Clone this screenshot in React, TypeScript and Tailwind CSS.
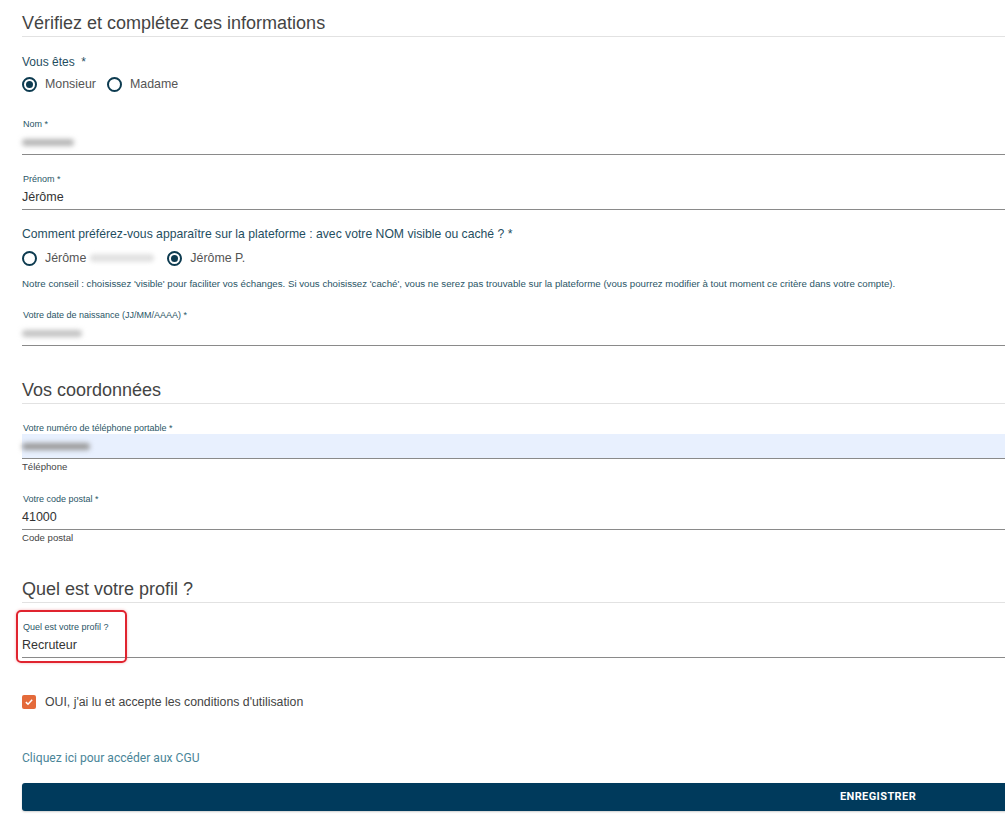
import React from "react";

const arial = "font-['Liberation_Sans',Arial,sans-serif]";

const Heading = ({ children, className = "" }: { children: React.ReactNode; className?: string }) => (
  <h2
    className={`${className} text-[18px] leading-[22px] text-[#444] pb-[2px] border-b border-[#e2e2e2]`}
  >
    {children}
  </h2>
);

const Blur = ({ w, tone = "bg-[#b5b5b5]" }: { w: number; tone?: string }) => (
  <span
    className={`inline-block h-[7px] rounded-full blur-[2.5px] ${tone}`}
    style={{ width: w }}
  />
);

const Radio = ({
  checked,
  label,
  extra,
  className = "mr-[11px]",
}: {
  checked?: boolean;
  label: string;
  extra?: React.ReactNode;
  className?: string;
}) => (
  <label className={`flex items-center gap-[8px] ${className}`}>
    <span className="w-[15px] h-[15px] rounded-full border-2 border-[#0d3b50] flex items-center justify-center">
      {checked && <span className="w-[7px] h-[7px] rounded-full bg-[#0d3b50]" />}
    </span>
    <span className="flex items-center text-[12.4px] leading-[16px] text-[#555]">
      {label}
      {extra}
    </span>
  </label>
);

const Field = ({
  label,
  value,
  className = "",
  filled,
  hint,
}: {
  label: string;
  value: React.ReactNode;
  className?: string;
  filled?: boolean;
  hint?: string;
}) => (
  <div className={className}>
    <div className="text-[9px] leading-[12px] text-[#2a5566] pl-[1px]">{label}</div>
    <div
      className={`h-[25px] flex items-center border-b border-[#8a8a8a] text-[12.5px] text-[#333] ${
        filled ? "bg-[#e8f0fe]" : ""
      }`}
    >
      {value}
    </div>
    {hint && <div className="text-[9.6px] leading-[14px] text-[#444] mt-[1px]">{hint}</div>}
  </div>
);

export default function App() {
  return (
    <div className={`w-full overflow-hidden bg-white min-h-[815px] ${arial}`}>
      <div className="w-[1712px] ml-[22px] flex flex-col relative">
        <Heading className="mt-[12px]">Vérifiez et complétez ces informations</Heading>

        <div className="mt-[17px] text-[12px] leading-[16px] text-[#1f4e5f]">Vous êtes&nbsp; *</div>
        <div className="mt-[6px] flex items-center h-[16px]">
          <Radio checked label="Monsieur" />
          <Radio label="Madame" />
        </div>

        <Field className="mt-[26px]" label="Nom *" value={<Blur w={52} />} />
        <Field className="mt-[18px]" label="Prénom *" value="Jérôme" />

        <div className="mt-[16px] text-[12.2px] leading-[16px] text-[#1f4e5f]">
          Comment préférez-vous apparaître sur la plateforme : avec votre NOM visible ou caché ? *
        </div>
        <div className="mt-[8px] flex items-center h-[16px]">
          <Radio
            label="Jérôme"
            className="mr-[13px]"
            extra={<span className="ml-[4px] inline-block w-[64px] h-[8px] bg-[#e2e2e2] blur-[2px] rounded-full" />}
          />
          <Radio checked label="Jérôme P." />
        </div>
        <div className="mt-[12px] text-[9.7px] leading-[12px] text-[#2a5566]">
          Notre conseil : choisissez 'visible' pour faciliter vos échanges. Si vous choisissez 'caché', vous ne serez pas
          trouvable sur la plateforme (vous pourrez modifier à tout moment ce critère dans votre compte).
        </div>

        <Field className="mt-[19px]" label="Votre date de naissance (JJ/MM/AAAA) *" value={<Blur w={60} tone="bg-[#c2c2c2]" />} />

        <Heading className="mt-[33px]">Vos coordonnées</Heading>

        <Field
          className="mt-[18px]"
          label="Votre numéro de téléphone portable *"
          value={<Blur w={68} tone="bg-[#9a9a9a]" />}
          filled
          hint="Téléphone"
        />
        <Field className="mt-[19px]" label="Votre code postal *" value="41000" hint="Code postal" />

        <Heading className="mt-[33px]">Quel est votre profil ?</Heading>

        <div className="relative mt-[18px]">
          <Field label="Quel est votre profil ?" value="Recruteur" />
          <div className="absolute left-[-6px] top-[-11px] w-[111px] h-[53px] rounded-[5px] border-2 border-[#e0242f] shadow-[0_0_3px_rgba(224,36,47,0.35)]" />
        </div>

        <label className="mt-[36px] flex items-center gap-[9px] h-[16px]">
          <span className="w-[14px] h-[14px] rounded-[2px] bg-[#e46a3a] flex items-center justify-center">
            <svg viewBox="0 0 12 12" className="w-[10px] h-[10px]">
              <path d="M2.2 6.2 L4.8 8.6 L9.8 3.4" fill="none" stroke="white" strokeWidth="1.8" />
            </svg>
          </span>
          <span className="text-[12.3px] text-[#444]">OUI, j'ai lu et accepte les conditions d'utilisation</span>
        </label>

        <a className="mt-[40px] text-[12.1px] leading-[16px] text-[#4a8598] font-['Roboto',sans-serif]">
          Cliquez ici pour accéder aux CGU
        </a>

        <button className="mt-[17px] h-[28px] w-full rounded-[3px] bg-[#003a5c] text-white text-[11px] font-bold font-['Roboto',sans-serif] tracking-[0.4px] shadow-[0_1px_2px_rgba(0,0,0,0.2)]">
          ENREGISTRER
        </button>
      </div>
    </div>
  );
}
